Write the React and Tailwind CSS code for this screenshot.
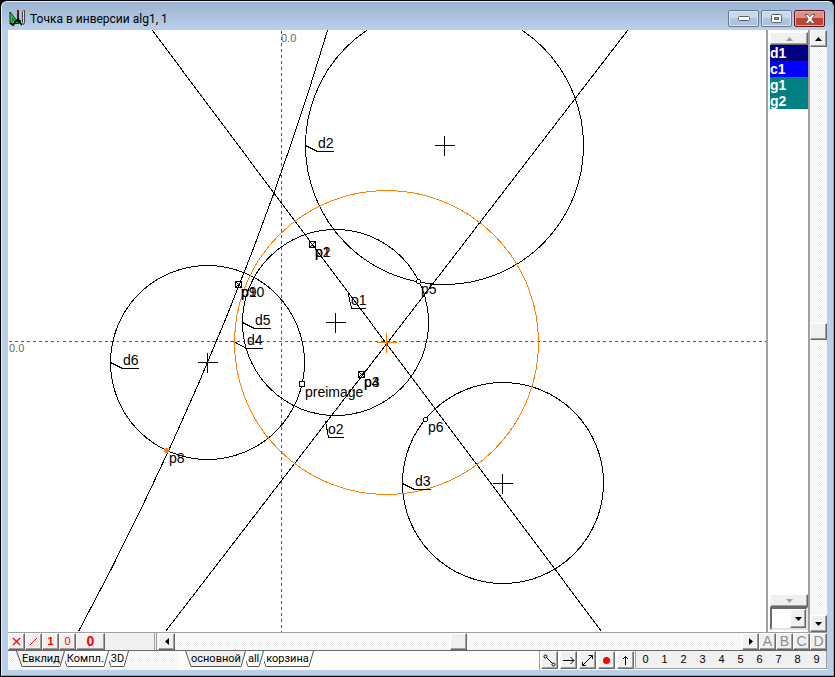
import React, { useState } from "react";

const circles = [
  { id: "d2", cx: 444, cy: 145, r: 139 },
  { id: "d3", cx: 502.5, cy: 482.5, r: 100.5 },
  { id: "d5", cx: 335, cy: 322, r: 93 },
  { id: "d6", cx: 207, cy: 362, r: 97 },
];

const inversion = { cx: 386, cy: 342, r: 152 };

const tags = [
  { text: "d2", x: 318, y: 148, path: "M305 145 L317 151 H333" },
  { text: "d3", x: 415, y: 486, path: "M402 483 L414 489 H430" },
  { text: "d4", x: 247, y: 345, path: "M235 342 L246 348 H262" },
  { text: "d5", x: 255, y: 325, path: "M242 322 L254 328 H270" },
  { text: "d6", x: 123, y: 365, path: "M110 362 L122 368 H138" },
  { text: "o1", x: 351, y: 305, path: "M348 294 L351 308 H365" },
  { text: "o2", x: 328, y: 434, path: "M325 421 L328 437 H343" },
];

const pointLabels = [
  { text: "p1", x: 315, y: 257 },
  { text: "p2", x: 315, y: 257 },
  { text: "p9", x: 241, y: 297 },
  { text: "p10", x: 241, y: 297 },
  { text: "p3", x: 364, y: 387 },
  { text: "p4", x: 364, y: 387 },
  { text: "p5", x: 421, y: 294 },
  { text: "p6", x: 428, y: 432 },
  { text: "p8", x: 169, y: 463 },
  { text: "preimage", x: 305, y: 397 },
];

const fixedPoints = [
  [312, 244],
  [238, 284],
  [361, 374],
];

const objects = [
  { name: "d1", color: "bg-[#000080]" },
  { name: "c1", color: "bg-[#0000ff]" },
  { name: "g1", color: "bg-[#008080]" },
  { name: "g2", color: "bg-[#008080]" },
];

const bevel =
  "flex shrink-0 items-center justify-center bg-[#f0f0f0] border border-t-white border-l-white border-r-[#696969] border-b-[#696969] shadow-[inset_-1px_-1px_0_#a0a0a0]";
const track =
  "bg-[repeating-conic-gradient(#ffffff_0_25%,#f0f0f0_0_50%)] bg-[length:2px_2px]";
const captionButton =
  "flex h-[17px] w-[31px] items-center justify-center rounded-[2px] border border-[#66788f] bg-linear-to-b from-[#c9d9ea] from-50% to-[#adc3dc] to-50% shadow-[inset_0_0_0_1px_#dce8f4]";

const Arrow = ({ dir, muted }) => {
  const d = {
    up: "M0 4h7L3.5 0z",
    down: "M0 0h7L3.5 4z",
    left: "M4 0v7L0 3.5z",
    right: "M0 0v7l4-3.5z",
  }[dir];
  const flat = dir === "up" || dir === "down";
  return (
    <svg width={flat ? 7 : 4} height={flat ? 4 : 7} className={muted ? "fill-[#a0a0a0]" : "fill-black"} aria-hidden="true">
      <path d={d} />
    </svg>
  );
};

const Cross = ({ x, y, color = "black" }) => (
  <path d={`M${x - 10} ${y}H${x + 10}M${x} ${y - 10}V${y + 10}`} stroke={color} />
);

const Drawing = () => (
  <svg
    viewBox="8 30 758 601"
    preserveAspectRatio="xMinYMin meet"
    className="absolute inset-0 h-full w-full"
    fill="none"
    stroke="black"
    role="img"
    aria-label="Чертёж"
  >
    <g transform="translate(0.5 0.5)" shapeRendering="crispEdges">
      <path d="M281 30V631M8 341H766" stroke="#555555" strokeDasharray="3 3" />
      {circles.map((c) => (
        <circle key={c.id} cx={c.cx} cy={c.cy} r={c.r} />
      ))}
      <path d="M152 30L601 631M627 30L165 631" />
      <path d="M327 30A3240 3240 0 0 1 78 631" />
      <circle cx={inversion.cx} cy={inversion.cy} r={inversion.r} stroke="#ff8000" />
      <Cross x={444} y={145} />
      <Cross x={502} y={483} />
      <Cross x={335} y={322} />
      <Cross x={207} y={362} />
      <Cross x={386} y={342} color="#ff8000" />
      {tags.map((t) => (
        <path key={t.text} d={t.path} />
      ))}
      {fixedPoints.map(([x, y]) => (
        <path key={x} d={`M${x - 3} ${y - 3}h6v6h-6zl6 6m0 -6l-6 6`} />
      ))}
      <rect x="299" y="381" width="5" height="5" fill="white" />
      <circle cx="418" cy="281" r="2" fill="white" />
      <circle cx="425" cy="419" r="2" fill="white" />
      <circle cx="166" cy="450" r="2" fill="#ff8000" stroke="#ff8000" />
    </g>
    <g fill="black" stroke="none" className="font-['Liberation_Sans',sans-serif] text-[14px]">
      {tags.map((t) => (
        <text key={t.text} x={t.x} y={t.y}>{t.text}</text>
      ))}
      {pointLabels.map((p) => (
        <text key={p.text} x={p.x} y={p.y}>{p.text}</text>
      ))}
    </g>
    <g fill="#666666" stroke="none" className="font-['Liberation_Sans',sans-serif] text-[11px]">
      <text x="281" y="42">0.0</text>
      <text x="9" y="352">0.0</text>
    </g>
  </svg>
);

// green set square with black compasses and a pencil
const AppIcon = () => (
  <svg width="17" height="17" viewBox="0 0 17 17" aria-hidden="true">
    <path d="M1 2v11.500h9z" fill="#10d830" stroke="black" strokeWidth="0.8" />
    <path d="M3.500 8.500v2.500h2z" fill="#b0cae5" stroke="black" strokeWidth="0.5" />
    <path d="M13.500 12.500V1.500l1-1h1v12.500l-1 1.500z" fill="#dddddd" stroke="#333333" strokeWidth="0.9" />
    <path d="M9 4v5l-3 3-2 4M9 8l1.500 4 2.500 3M7 11h5M1 13l3 2" stroke="black" strokeWidth="1.6" fill="none" />
    <path d="M9 0v4" stroke="#a00000" strokeWidth="2" />
  </svg>
);

const TitleBar = () => (
  <header className="flex h-[27px] shrink-0 items-end pr-[2px] pb-[3px] pl-px">
    <AppIcon />
    <h1 className="ml-1 grow font-['Roboto',sans-serif] text-[12px] leading-4">Точка в инверсии alg1, 1</h1>
    <div className="flex gap-[2px]">
      <button aria-label="Свернуть" className={captionButton}>
        <svg width="12" height="5" aria-hidden="true"><rect x="0.500" y="0.500" width="11" height="4" rx="1" fill="white" stroke="#54606f" /></svg>
      </button>
      <button aria-label="Развернуть" className={captionButton}>
        <svg width="11" height="9" aria-hidden="true">
          <rect x="0.500" y="0.500" width="10" height="8" rx="1" fill="white" stroke="#54606f" />
          <rect x="3.500" y="3.500" width="4" height="2" fill="#9db4cc" stroke="#54606f" />
        </svg>
      </button>
      <button aria-label="Закрыть" className="flex h-[17px] w-[31px] items-center justify-center rounded-[2px] border border-[#5a1a22] bg-linear-to-b from-[#d99184] from-50% to-[#bf4530] to-50% shadow-[inset_0_0_0_1px_#e3aca2]">
        <svg width="12" height="10" viewBox="0 0 12 10" aria-hidden="true">
          <path d="M1 .5h3l2 2.300 2-2.300h3L7.800 5 11 9.500H8L6 7.200 4 9.500H1L4.200 5z" fill="white" stroke="#5b5563" strokeWidth="0.9" />
        </svg>
      </button>
    </div>
  </header>
);

const ObjectPanel = () => (
  <aside className="flex w-[44px] shrink-0 flex-col border-r-2 border-l-2 border-[#a0a0a0] bg-white pl-[2px]">
    <button aria-label="Вверх" className={`${bevel} mt-[2px] h-[13px]`}><Arrow dir="up" muted /></button>
    <ul className="grow font-['Liberation_Sans',sans-serif] text-[14px] leading-4 font-bold text-white">
      {objects.map((o) => (
        <li key={o.name} className={`${o.color} h-4`}>{o.name}</li>
      ))}
    </ul>
    <button aria-label="Вниз" className={`${bevel} h-[13px]`}><Arrow dir="down" muted /></button>
    <div className="relative mb-[2px] h-[23px] border-2 border-[#e3e3e3] border-t-[#696969] border-l-[#696969]">
      <select aria-label="Объект" className="block h-full w-full appearance-none bg-white">
        <option></option>
      </select>
      <span className={`${bevel} pointer-events-none absolute inset-y-0 right-0 w-4`}><Arrow dir="down" /></span>
    </div>
  </aside>
);

const VerticalScroll = () => (
  <div className="flex w-[17px] shrink-0 flex-col">
    <button aria-label="Прокрутить вверх" className={`${bevel} h-[17px]`}><Arrow dir="up" /></button>
    <div className={`${track} flex grow flex-col justify-center`}>
      <div className={`${bevel} h-[17px]`} />
    </div>
    <button aria-label="Прокрутить вниз" className={`${bevel} h-[17px]`}><Arrow dir="down" /></button>
  </div>
);

const ToolRow = () => (
  <div className="flex h-[18px] shrink-0 border-t border-[#a0a0a0] bg-[#f0f0f0] font-['Liberation_Sans',sans-serif]">
    <button aria-label="Удалить" className={`${bevel} w-[17px]`}>
      <svg width="9" height="9" viewBox="0 0 9 9" aria-hidden="true"><path d="M1 1l7 7M8 1L1 8" stroke="#ff0000" strokeWidth="1.2" /></svg>
    </button>
    <button aria-label="Линия" className={`${bevel} w-[17px]`}>
      <svg width="9" height="9" viewBox="0 0 9 9" aria-hidden="true"><path d="M1 8L8 1" stroke="#ff0000" /></svg>
    </button>
    <button className={`${bevel} w-[17px] text-[11px] font-bold text-[#ff0000]`}>1</button>
    <button className={`${bevel} w-[17px] text-[11px] text-[#ff0000]`}>0</button>
    <button className={`${bevel} w-[29px] text-[14px] font-bold text-[#ff0000]`}>0</button>
    <div className="w-[50px] border-r border-[#a0a0a0]" />
    <div className="ml-px w-[2px] border-l border-[#a0a0a0]" />
    <button aria-label="Прокрутить влево" className={`${bevel} w-[17px]`}><Arrow dir="left" /></button>
    <div className={`${track} flex grow justify-center`}>
      <div className={`${bevel} w-[17px]`} />
    </div>
    <button aria-label="Прокрутить вправо" className={`${bevel} w-[17px]`}><Arrow dir="right" /></button>
    {["A", "B", "C", "D"].map((l) => (
      <button key={l} className={`${bevel} w-[17px] text-[14px] text-[#8c8c8c]`}>{l}</button>
    ))}
  </div>
);

const TabStrip = ({ items, label }) => {
  const [active, setActive] = useState(items[0]);
  return (
    <nav aria-label={label} className="flex h-4 font-['Roboto',sans-serif] text-[11px] leading-4">
      {items.map((item, i) => {
        const fill = item === active ? "fill-[#f0f0f0]" : "fill-white";
        return (
          <button key={item} onClick={() => setActive(item)} className="flex h-4">
            {i === 0 ? (
              <svg width="6" height="16" className={fill} aria-hidden="true">
                <path d="M0 0L6 15.500V0z" /><path d="M0.500 0L6 15.500" stroke="#555555" fill="none" />
              </svg>
            ) : (
              <svg width="2" height="16" className={fill} aria-hidden="true">
                <path d="M0 0V10L2 15.500V0z" /><path d="M0 10L2 15.500" stroke="#555555" fill="none" />
              </svg>
            )}
            <span className={`h-4 border-b border-[#555555] ${item === active ? "bg-[#f0f0f0]" : "bg-white"}`}>{item}</span>
            <svg width="5" height="16" className={fill} aria-hidden="true">
              <path d="M0 0h5L0 15.500z" /><path d="M4.500 0L0 15.500" stroke="#555555" fill="none" />
            </svg>
          </button>
        );
      })}
    </nav>
  );
};

const drawTools = [
  { name: "Отрезок", icon: <><circle cx="2.500" cy="2.500" r="1.500" /><circle cx="10.500" cy="10.500" r="1.500" /><path d="M3.500 3.500l6 6" /></> },
  { name: "Луч", icon: <path d="M1 6.500h11M8.500 3l3.500 3.500L8.500 10" /> },
  { name: "Прямая", icon: <path d="M2 11l9-9M7.500 1.500h4V5M1.500 8v3.500H5" /> },
  { name: "Точка", icon: <circle cx="6.500" cy="6.500" r="3.500" fill="red" stroke="none" /> },
  { name: "Вверх", icon: <path d="M6.500 11V2.500M4 5l2.500-2.500L9 5" /> },
];

const BottomRow = () => (
  <footer className="flex h-5 shrink-0 border-t border-[#696969] bg-[#f0f0f0]">
    <div className={`${track} w-[170px] shrink-0 pl-2`}>
      <TabStrip label="Геометрия" items={["Евклид", "Компл.", "3D"]} />
    </div>
    <div className="grow bg-[#fffef9] pl-[7px]">
      <TabStrip label="Страницы" items={["основной", "all", "корзина"]} />
    </div>
    <div className="flex border-l border-[#a0a0a0] bg-white pl-px">
      <div className="flex h-[18px] gap-[2px] pr-px">
        {drawTools.map((t) => (
          <button key={t.name} aria-label={t.name} className={`${bevel} w-[17px]`}>
            <svg width="13" height="13" fill="none" stroke="black" aria-hidden="true">{t.icon}</svg>
          </button>
        ))}
      </div>
      <div className="flex h-[18px] border-r border-b border-l border-[#a0a0a0] bg-[#f0f0f0] font-['Liberation_Sans',sans-serif] text-[11px]">
        {[0, 1, 2, 3, 4, 5, 6, 7, 8, 9].map((n) => (
          <button key={n} className="w-[19px]">{n}</button>
        ))}
      </div>
    </div>
  </footer>
);

export default function App() {
  return (
    <div className="flex h-screen bg-black font-['Roboto',sans-serif] text-black">
      <div className="m-px flex grow flex-col rounded-t-md border border-t-[#dfeefb] border-r-[#3cc8e8] border-b-[#3cc8e8] border-l-[#dfeefb] bg-[#bad0ea] bg-linear-to-b from-[#99b4d1] to-[#bad0ea] to-[28px] px-[6px] pt-px pb-[5px]">
        <TitleBar />
        <main className="flex min-h-0 grow flex-col bg-white">
          <div className="flex min-h-0 grow">
            <div className="relative grow overflow-hidden bg-white">
              <Drawing />
            </div>
            <ObjectPanel />
            <VerticalScroll />
          </div>
          <ToolRow />
          <BottomRow />
        </main>
      </div>
    </div>
  );
}
